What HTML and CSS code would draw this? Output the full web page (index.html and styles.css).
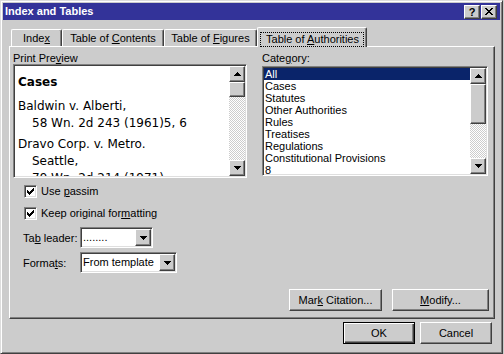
FILE: index.html
```html
<!DOCTYPE html>
<html lang="en">
<head>
    <meta charset="UTF-8">
    <title>Index and Tables</title>
    <link rel="stylesheet" href="styles.css">
</head>
<body>
    <div class="window">
        <div class="titlebar">
            <span class="title">Index and Tables</span>
            <div class="title-buttons">
                <span class="title-btn">?</span>
                <span class="title-btn">
                    <svg width="8" height="7" viewBox="0 0 8 7"><path d="M0 0h2v1H0zM6 0h2v1H6zM1 1h2v1H1zM5 1h2v1H5zM2 2h4v1H2zM3 3h2v1H3zM2 4h4v1H2zM1 5h2v1H1zM5 5h2v1H5zM0 6h2v1H0zM6 6h2v1H6z"/></svg>
                </span>
            </div>
        </div>

        <div class="client">
            <div class="tabs">
                <div class="tab tab-index">Inde<u>x</u></div>
                <div class="tab tab-contents">Table of <u>C</u>ontents</div>
                <div class="tab tab-figures">Table of <u>F</u>igures</div>
                <div class="tab tab-active tab-authorities"><span class="focus">Table of <u>A</u>uthorities</span></div>
            </div>

            <div class="panel">
                <div class="top-row">
                    <div class="preview-col">
                        <div class="label">Print Pre<u>v</u>iew</div>
                        <div class="sunken preview">
                            <div class="preview-text">
                                <div class="pv-heading">Cases</div>
                                <div class="pv-entry">
                                    <div>Baldwin v. Alberti,</div>
                                    <div class="pv-indent">58 Wn. 2d 243 (1961)5, 6</div>
                                </div>
                                <div class="pv-entry">
                                    <div>Dravo Corp. v. Metro.</div>
                                    <div class="pv-indent">Seattle,</div>
                                    <div class="pv-indent">79 Wn. 2d 214 (1971)</div>
                                </div>
                            </div>
                            <div class="scrollbar">
                                <div class="raised sb-btn"><svg width="7" height="4" viewBox="0 0 7 4"><path d="M3 0h1v1h1v1h1v1h1v1H0V3h1V2h1V1h1z"/></svg></div>
                                <div class="raised sb-thumb thumb-preview"></div>
                                <div class="sb-track"></div>
                                <div class="raised sb-btn"><svg width="7" height="4" viewBox="0 0 7 4"><path d="M0 0h7v1H6v1H5v1H4v1H3V3H2V2H1V1H0z"/></svg></div>
                            </div>
                        </div>
                    </div>

                    <div class="category-col">
                        <div class="label">Cate<u>g</u>ory:</div>
                        <div class="sunken listbox">
                            <div class="list">
                                <div class="list-item selected">All</div>
                                <div class="list-item">Cases</div>
                                <div class="list-item">Statutes</div>
                                <div class="list-item">Other Authorities</div>
                                <div class="list-item">Rules</div>
                                <div class="list-item">Treatises</div>
                                <div class="list-item">Regulations</div>
                                <div class="list-item">Constitutional Provisions</div>
                                <div class="list-item">8</div>
                            </div>
                            <div class="scrollbar">
                                <div class="raised sb-btn"><svg width="7" height="4" viewBox="0 0 7 4"><path d="M3 0h1v1h1v1h1v1h1v1H0V3h1V2h1V1h1z"/></svg></div>
                                <div class="raised sb-thumb thumb-list"></div>
                                <div class="sb-track"></div>
                                <div class="raised sb-btn"><svg width="7" height="4" viewBox="0 0 7 4"><path d="M0 0h7v1H6v1H5v1H4v1H3V3H2V2H1V1H0z"/></svg></div>
                            </div>
                        </div>
                    </div>
                </div>

                <div class="check-row first">
                    <span class="sunken checkbox"><svg width="7" height="7" viewBox="0 0 7 7"><path d="M0 2h1v1h1v1h1V3h1V2h1V1h1V0h1v3H6v1H5v1H4v1H3v1H2V6H1V5H0z"/></svg></span>
                    <span>Use <u>p</u>assim</span>
                </div>
                <div class="check-row">
                    <span class="sunken checkbox"><svg width="7" height="7" viewBox="0 0 7 7"><path d="M0 2h1v1h1v1h1V3h1V2h1V1h1V0h1v3H6v1H5v1H4v1H3v1H2V6H1V5H0z"/></svg></span>
                    <span>Keep original for<u>m</u>atting</span>
                </div>

                <div class="field-row first">
                    <span class="field-label">Ta<u>b</u> leader:</span>
                    <div class="sunken combo combo-leader">
                        <span class="combo-text">........</span>
                        <span class="raised combo-btn"><svg width="7" height="4" viewBox="0 0 7 4"><path d="M0 0h7v1H6v1H5v1H4v1H3V3H2V2H1V1H0z"/></svg></span>
                    </div>
                </div>
                <div class="field-row">
                    <span class="field-label">Forma<u>t</u>s:</span>
                    <div class="sunken combo combo-formats">
                        <span class="combo-text">From template</span>
                        <span class="raised combo-btn"><svg width="7" height="4" viewBox="0 0 7 4"><path d="M0 0h7v1H6v1H5v1H4v1H3V3H2V2H1V1H0z"/></svg></span>
                    </div>
                </div>

                <div class="panel-buttons">
                    <div class="raised btn btn-mark"><span>Mar<u>k</u> Citation...</span></div>
                    <div class="raised btn btn-modify"><span><u>M</u>odify...</span></div>
                </div>
            </div>

            <div class="dialog-buttons">
                <div class="btn btn-default"><span>OK</span></div>
                <div class="raised btn"><span>Cancel</span></div>
            </div>
        </div>
    </div>
</body>
</html>
```

FILE: styles.css
```css
body {
    margin: 0;
    background-color: #cccccc;
    font-family: "Liberation Sans", Arial, sans-serif;
    font-size: 11px;
    color: #000;
}
u {
    text-decoration-thickness: 1px;
}
.window {
    width: 503px;
    height: 354px;
    box-sizing: border-box;
    padding: 2px;
    border: 1px solid;
    border-color: #dddddd #404040 #404040 #dddddd;
    box-shadow: inset 1px 1px #ffffff, inset -1px -1px #808080;
    background-color: #cccccc;
    overflow: hidden;
}

/* title bar */
.titlebar {
    display: flex;
    align-items: center;
    height: 17px;
    padding: 0 3px 0 2px;
    background-color: #333399;
    color: #fff;
}
.title {
    flex: 1;
    font-weight: bold;
    line-height: 17px;
}
.title-buttons {
    display: flex;
    gap: 1px;
}
.title-btn {
    display: flex;
    align-items: center;
    justify-content: center;
    width: 16px;
    height: 14px;
    box-sizing: border-box;
    background-color: #cccccc;
    color: #000;
    font-weight: bold;
    font-size: 11px;
    line-height: 12px;
    border: 1px solid;
    border-color: #ffffff #404040 #404040 #ffffff;
    box-shadow: inset -1px -1px #808080;
}

/* 3d helpers */
.raised {
    box-sizing: border-box;
    background-color: #cccccc;
    border: 1px solid;
    border-color: #ffffff #404040 #404040 #ffffff;
    box-shadow: inset -1px -1px #808080;
}
.sunken {
    box-sizing: border-box;
    background-color: #ffffff;
    border: 1px solid;
    border-color: #808080 #ffffff #ffffff #808080;
    padding: 1px;
    box-shadow: inset 1px 1px #404040, inset -1px -1px #dfdfdf;
}

.client {
    padding: 7px 0 0 6px;
}

/* tabs */
.tabs {
    display: flex;
    align-items: flex-end;
    padding-left: 2px;
}
.tab {
    height: 17px;
    box-sizing: border-box;
    text-align: center;
    line-height: 16px;
    border-top: 1px solid #ffffff;
    border-left: 1px solid #ffffff;
    border-right: 1px solid #404040;
    box-shadow: inset -1px 0 #808080;
    border-radius: 2px 2px 0 0;
}
.tab-index { width: 51px; }
.tab-contents { width: 102px; }
.tab-figures { width: 93px; }
.tab-authorities { width: 110px; }
.tab-active {
    position: relative;
    z-index: 1;
    height: 20px;
    margin-bottom: -1px;
    padding-top: 3px;
    background-color: #cccccc;
}
.focus {
    display: inline-block;
    line-height: 13px;
    padding: 0 4px 0 5px;
    border: 1px dotted #000;
}

/* main panel */
.panel {
    width: 486px;
    box-sizing: border-box;
    padding: 5px 5px 7px 3px;
    border: 1px solid;
    border-color: #ffffff #404040 #404040 #ffffff;
    box-shadow: inset -1px -1px #808080;
}
.top-row {
    display: flex;
    gap: 15px;
}
.label {
    line-height: 12px;
}
.preview-col {
    width: 234px;
}
.category-col {
    width: 226px;
}
.preview {
    display: flex;
    height: 114px;
}
.preview-text {
    flex: 1;
    padding: 8px 0 0 3px;
    overflow: hidden;
    font-family: "DejaVu Sans", Verdana, sans-serif;
    font-size: 12px;
    line-height: 17px;
    white-space: nowrap;
}
.pv-heading {
    font-weight: bold;
    margin-bottom: 7px;
}
.pv-entry {
    margin-bottom: 4px;
}
.pv-indent {
    padding-left: 14px;
}

.scrollbar {
    display: flex;
    flex-direction: column;
    width: 16px;
}
.sb-btn {
    display: flex;
    align-items: center;
    justify-content: center;
    flex: none;
    height: 16px;
}
.sb-thumb {
    flex: none;
}
.thumb-preview { height: 15px; }
.thumb-list { height: 40px; }
.sb-track {
    flex: 1;
    background: repeating-conic-gradient(#ffffff 0 25%, #cccccc 0 50%) 0 0 / 2px 2px;
}

.listbox {
    display: flex;
    height: 110px;
    margin-top: 2px;
}
.list {
    flex: 1;
    overflow: hidden;
}
.list-item {
    line-height: 12px;
    padding-left: 1px;
    white-space: nowrap;
}
.list-item.selected {
    background-color: #0a246a;
    color: #ffffff;
}

/* checkboxes */
.check-row {
    display: flex;
    align-items: center;
    gap: 4px;
    margin: 9px 0 0 11px;
    line-height: 13px;
}
.check-row.first {
    margin-top: 7px;
}
.checkbox {
    display: flex;
    width: 13px;
    height: 13px;
}
.checkbox svg {
    margin: 1px;
}

/* combos */
.field-row {
    display: flex;
    align-items: center;
    margin: 4px 0 0 10px;
}
.field-row.first {
    margin-top: 7px;
}
.field-label {
    width: 57px;
    line-height: 12px;
}
.combo {
    display: flex;
    height: 21px;
}
.combo-leader { width: 73px; }
.combo-formats { width: 97px; }
.combo-text {
    flex: 1;
    padding-left: 1px;
    line-height: 17px;
    white-space: nowrap;
}
.combo-btn {
    display: flex;
    align-items: center;
    justify-content: center;
    width: 16px;
    height: 17px;
}

/* buttons */
.btn {
    display: flex;
    align-items: center;
    justify-content: center;
    height: 22px;
    box-sizing: border-box;
    width: 72px;
    white-space: nowrap;
}
.panel-buttons {
    display: flex;
    justify-content: flex-end;
    gap: 10px;
    margin-top: 16px;
}
.btn-mark { width: 93px; }
.btn-modify { width: 97px; }
.dialog-buttons {
    display: flex;
    justify-content: flex-end;
    gap: 5px;
    margin-top: 3px;
    padding-right: 8px;
}
.btn-default {
    background-color: #cccccc;
    border: 1px solid #000;
    box-shadow: inset 1px 1px #ffffff, inset -1px -1px #404040, inset -2px -2px #808080;
}
```
